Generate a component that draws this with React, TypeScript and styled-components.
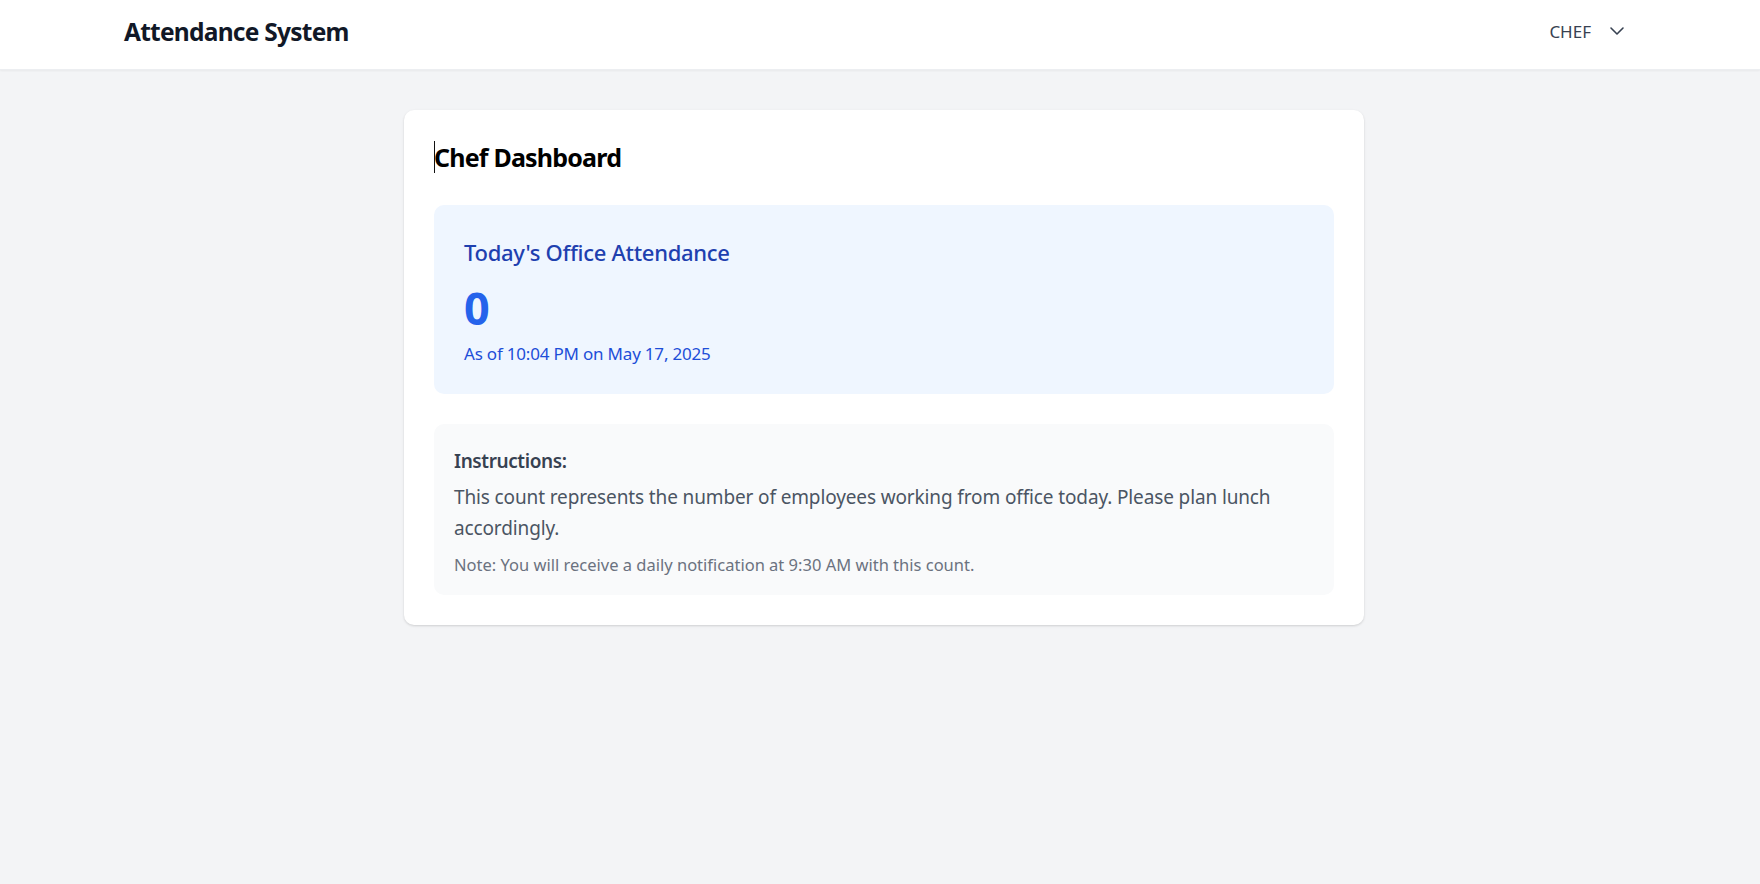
import React from 'react';
import styled, { createGlobalStyle } from 'styled-components';

const GlobalStyle = createGlobalStyle`
  html, body {
    margin: 0;
    padding: 0;
    background: #f3f4f6;
    font-family: 'Noto Sans', 'Open Sans', sans-serif;
  }
  * {
    box-sizing: border-box;
  }
`;

const Page = styled.div`
  min-height: 884px;
  background: #f3f4f6;
`;

const Header = styled.header`
  height: 70px;
  background: #ffffff;
  box-shadow: 0 1px 2px rgba(0, 0, 0, 0.05);
  border-bottom: 1px solid #eceef1;
`;

const HeaderInner = styled.div`
  height: 62px;
  padding: 0 131px 0 124px;
  display: flex;
  align-items: center;
  justify-content: space-between;
`;

const Brand = styled.h1`
  margin: 0;
  font-size: 24.5px;
  line-height: 35px;
  font-weight: 700;
  color: #111827;
  letter-spacing: -0.75px;
`;

const UserMenu = styled.button`
  display: flex;
  align-items: center;
  gap: 14px;
  border: none;
  background: transparent;
  padding: 0;
  font-family: inherit;
  font-size: 17px;
  line-height: 25px;
  color: #374151;
  cursor: pointer;
`;

const Main = styled.main`
  display: flex;
  justify-content: center;
  padding: 40px 0 0 8px;
`;

const Card = styled.section`
  width: 960px;
  background: #ffffff;
  border-radius: 10px;
  box-shadow: 0 1px 3px rgba(0, 0, 0, 0.1), 0 1px 2px rgba(0, 0, 0, 0.06);
  padding: 30px;
`;

const Title = styled.h2`
  position: relative;
  margin: 0 0 30px;
  font-size: 25px;
  line-height: 35px;
  font-weight: 700;
  color: #000000;
  letter-spacing: -0.8px;

  &::before {
    content: '';
    position: absolute;
    left: 0;
    top: 1px;
    width: 1px;
    height: 32px;
    background: #111111;
  }
`;

const StatBox = styled.div`
  background: #eff6ff;
  border-radius: 10px;
  padding: 30px 30px 28px;
`;

const StatLabel = styled.h3`
  margin: 0 0 13px;
  font-size: 22px;
  line-height: 35px;
  font-weight: 500;
  color: #1e40af;
  letter-spacing: -0.3px;
`;

const StatValue = styled.div`
  font-size: 45px;
  line-height: 50px;
  font-weight: 700;
  color: #2563eb;
`;

const StatMeta = styled.p`
  margin: 8px 0 0;
  font-size: 17px;
  line-height: 25px;
  color: #1d4ed8;
  letter-spacing: -0.2px;
`;

const InfoBox = styled.div`
  margin-top: 30px;
  background: #f9fafb;
  border-radius: 10px;
  padding: 22px 20px 18px;
`;

const InfoHeading = styled.h4`
  margin: 0 0 6px;
  font-size: 19px;
  line-height: 30px;
  font-weight: 600;
  color: #374151;
  letter-spacing: -0.4px;
`;

const InfoText = styled.p`
  margin: 0;
  font-size: 19px;
  line-height: 30.5px;
  color: #4b5563;
  letter-spacing: -0.13px;
`;

const InfoNote = styled.p`
  margin: 9px 0 0;
  font-size: 16.5px;
  line-height: 25px;
  color: #6b7280;
  letter-spacing: 0;
`;

const Chevron = () => (
  <svg width="24" height="24" viewBox="0 0 24 24" fill="none" stroke="#374151" strokeWidth="1.6" strokeLinecap="round" strokeLinejoin="round">
    <path d="M6 9l6 6 6-6" />
  </svg>
);

const App: React.FC = () => (
  <Page>
    <GlobalStyle />
    <Header>
      <HeaderInner>
        <Brand>Attendance System</Brand>
        <UserMenu type="button">
          CHEF
          <Chevron />
        </UserMenu>
      </HeaderInner>
    </Header>
    <Main>
      <Card>
        <Title>Chef Dashboard</Title>
        <StatBox>
          <StatLabel>Today&apos;s Office Attendance</StatLabel>
          <StatValue>0</StatValue>
          <StatMeta>As of 10:04 PM on May 17, 2025</StatMeta>
        </StatBox>
        <InfoBox>
          <InfoHeading>Instructions:</InfoHeading>
          <InfoText>
            This count represents the number of employees working from office today. Please plan lunch accordingly.
          </InfoText>
          <InfoNote>Note: You will receive a daily notification at 9:30 AM with this count.</InfoNote>
        </InfoBox>
      </Card>
    </Main>
  </Page>
);

export default App;
